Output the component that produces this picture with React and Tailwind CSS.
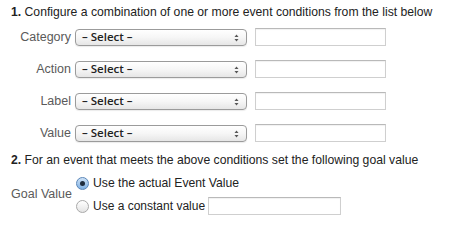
import React from "react";

function Select() {
  return (
    <div className="relative flex h-[17px] w-[172px] items-center rounded-[4px] border border-[#9b9b9b] bg-gradient-to-b from-[#ffffff] via-[#f6f6f6] to-[#e6e6e6] pl-[6px] shadow-[0_1px_1px_rgba(0,0,0,0.08)]">
      <span className="-mt-[1px] font-['Open_Sans',sans-serif] text-[11.5px] font-semibold leading-none text-[#222]">– Select –</span>
      <svg className="absolute right-[7px] top-[4px]" width="5" height="8" viewBox="0 0 5 8">
        <path d="M2.5 0.5 L4.5 3 L0.5 3 Z" fill="#555" />
        <path d="M2.5 7.5 L4.5 5 L0.5 5 Z" fill="#555" />
      </svg>
    </div>
  );
}

function TextBox({ w = "w-[131px]" }) {
  return (
    <div className={`h-[18px] ${w} border border-[#cfcfcf] border-t-[#b9b9b9] bg-white shadow-[inset_0_1px_1px_rgba(0,0,0,0.06)]`} />
  );
}

function Row({ label }) {
  return (
    <div className="flex h-[18px] items-center">
      <div className="w-[64px] pr-[4px] text-right text-[12.5px] text-[#5a5a5a]">{label}</div>
      <Select />
      <div className="w-[8px]" />
      <TextBox />
    </div>
  );
}

function Radio({ checked }) {
  return (
    <div
      className={`flex h-[13px] w-[13px] shrink-0 items-center justify-center rounded-full border ${
        checked
          ? "border-[#5a86b8] bg-gradient-to-b from-[#cfe3f7] to-[#7fb0e3]"
          : "border-[#a9a9a9] bg-gradient-to-b from-[#ffffff] to-[#e4e4e4]"
      }`}
    >
      {checked && <div className="h-[5px] w-[5px] rounded-full bg-[#1f2c3d]" />}
    </div>
  );
}

export default function App() {
  return (
    <div className="h-[222px] w-[453px] bg-white pl-[11px] pt-[4px] font-['Liberation_Sans',Arial,sans-serif] text-[#222]">
      <div className="h-[16px] text-[12.2px] leading-[16px]">
        <b>1.</b> Configure a combination of one or more event conditions from the list below
      </div>
      <div className="mt-[8px] flex flex-col gap-[14px]">
        <Row label="Category" />
        <Row label="Action" />
        <Row label="Label" />
        <Row label="Value" />
      </div>
      <div className="mt-[10px] h-[16px] text-[12.2px] leading-[16px]">
        <b>2.</b> For an event that meets the above conditions set the following goal value
      </div>
      <div className="mt-[7px] flex items-center">
        <div className="w-[65px] text-[12.5px] text-[#5a5a5a]">Goal Value</div>
        <div className="flex flex-col gap-[7px]">
          <div className="flex h-[16px] items-center gap-[4px]">
            <Radio checked />
            <span className="text-[12.2px]">Use the actual Event Value</span>
          </div>
          <div className="flex h-[16px] items-center">
            <Radio />
            <span className="ml-[4px] text-[12px]">Use a constant value</span>
            <div className="ml-[3px]">
              <TextBox w="w-[133px]" />
            </div>
          </div>
        </div>
      </div>
    </div>
  );
}
